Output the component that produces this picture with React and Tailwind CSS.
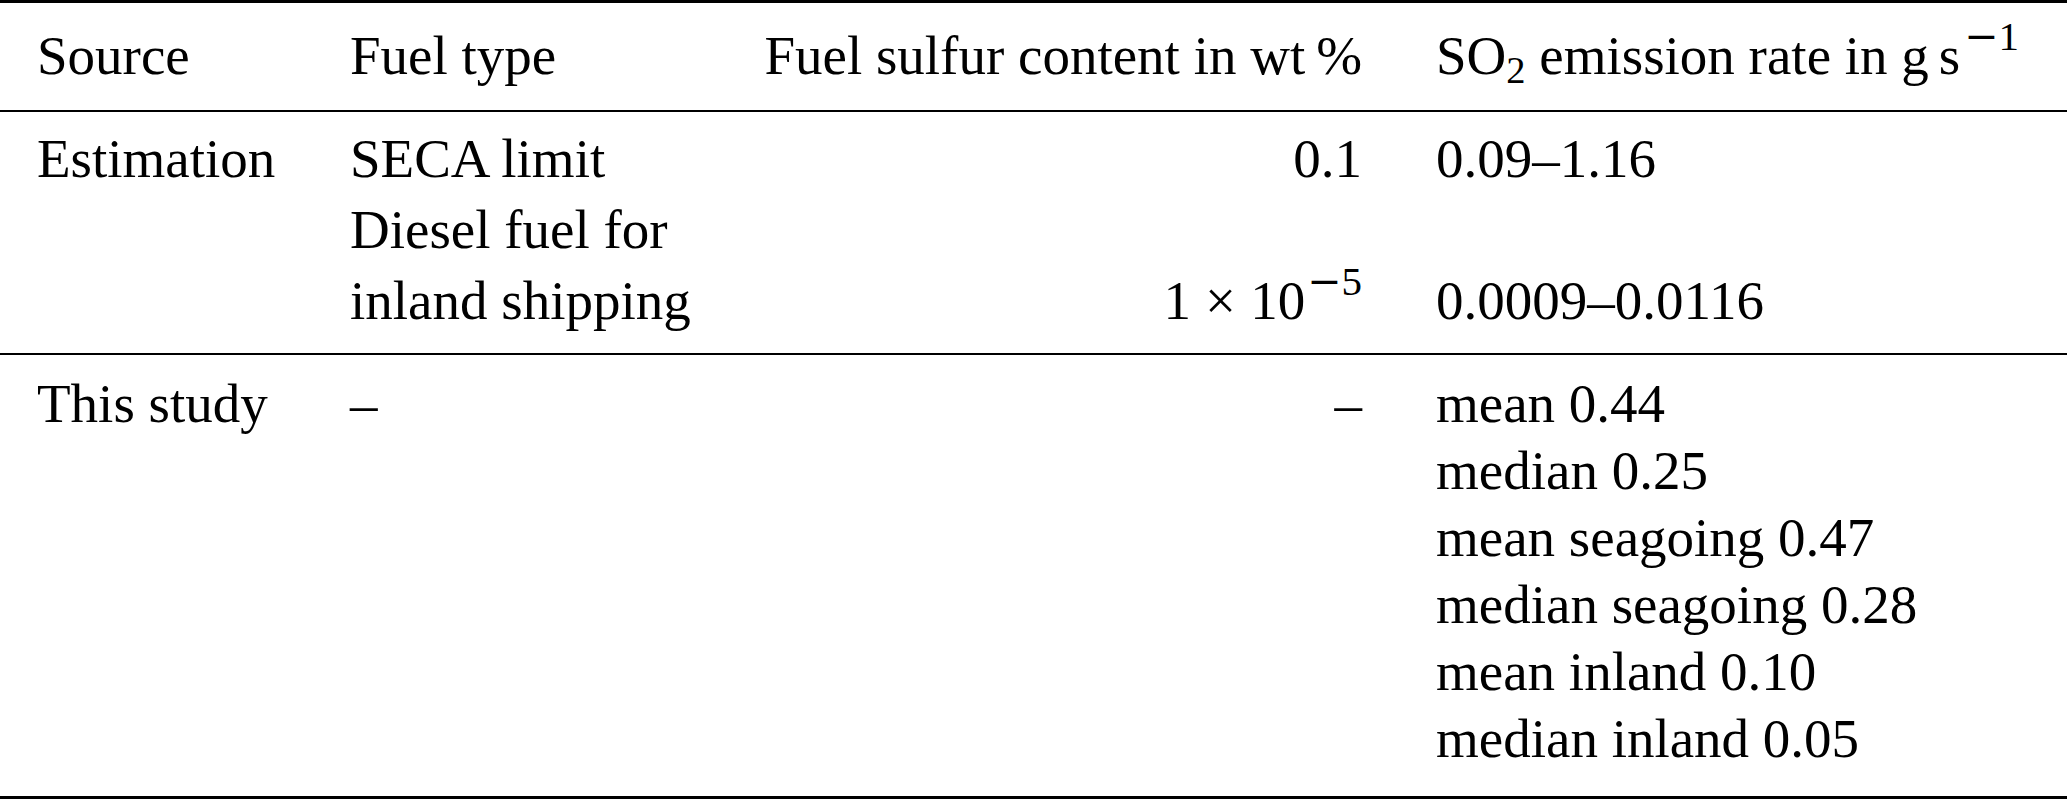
import React from "react";

const grid = "grid grid-cols-[350px_400px_612px_1fr]";

function Sup({ children }) {
  return (
    <span className="relative top-[-24px] text-[41px] leading-none">
      <span className="font-['DejaVu_Serif',serif] font-light">−</span>
      {children}
    </span>
  );
}

function Sub({ children }) {
  return (
    <span className="relative top-[9px] text-[38.5px] leading-none">{children}</span>
  );
}

function Row({ cells, h = "h-[67px] leading-[67px]" }) {
  return (
    <div className={`${grid} ${h} whitespace-nowrap`}>
      <div className="pl-[37px]">{cells[0]}</div>
      <div>{cells[1]}</div>
      <div className="text-right">{cells[2]}</div>
      <div className="pl-[74px]">{cells[3]}</div>
    </div>
  );
}

export default function App() {
  return (
    <div className="w-[2067px] h-[799px] bg-white text-black font-['Liberation_Serif','Times_New_Roman',serif] text-[55px] overflow-hidden">
      <div className="h-[3px] bg-black" />
      <div className="pt-[19px] pb-[21px]">
        <Row
          cells={[
            "Source",
            "Fuel type",
            <span>Fuel sulfur content in wt&#8201;%</span>,
            <span>
              SO<Sub>2</Sub> emission rate in g<span className="inline-block w-[10px]" />s
              <span className="inline-block w-[4px]" />
              <Sup>1</Sup>
            </span>,
          ]}
        />
      </div>
      <div className="h-[2px] bg-black" />
      <div className="pt-[11px] pb-[17px]">
        <Row
          h="h-[71px] leading-[71px]"
          cells={["Estimation", "SECA limit", "0.1", "0.09–1.16"]}
        />
        <Row h="h-[71px] leading-[71px]" cells={["", "Diesel fuel for", "", ""]} />
        <Row
          h="h-[71px] leading-[71px]"
          cells={[
            "",
            "inland shipping",
            <span>
              1<span className="mx-[14px]">×</span>10
              <span className="inline-block w-[2px]" />
              <Sup>5</Sup>
            </span>,
            "0.0009–0.0116",
          ]}
        />
      </div>
      <div className="h-[2px] bg-black" />
      <div className="pt-[15px] pb-[24px]">
        <Row cells={["This study", "–", "–", "mean 0.44"]} />
        <Row cells={["", "", "", "median 0.25"]} />
        <Row cells={["", "", "", "mean seagoing 0.47"]} />
        <Row cells={["", "", "", "median seagoing 0.28"]} />
        <Row cells={["", "", "", "mean inland 0.10"]} />
        <Row cells={["", "", "", "median inland 0.05"]} />
      </div>
      <div className="h-[3px] bg-black" />
    </div>
  );
}
